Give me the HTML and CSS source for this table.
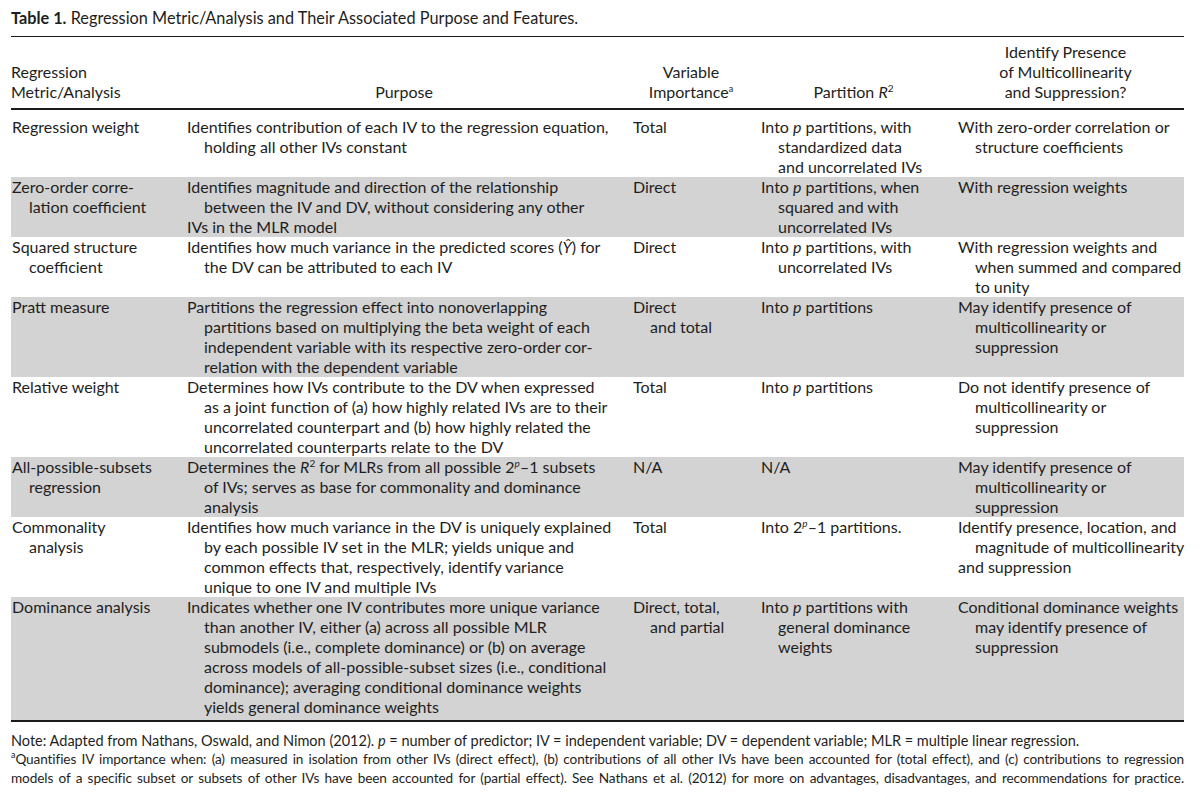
FILE: index.html
```html
<!DOCTYPE html>
<html>
<head>
<meta charset="utf-8">
<link rel="stylesheet" href="styles.css">
</head>
<body>
<div class="page">
  <div class="caption"><b>Table 1.</b> Regression Metric/Analysis and Their Associated Purpose and Features.</div>
  <table class="tbl">
    <colgroup>
      <col class="c1"><col class="c2"><col class="c3"><col class="c4"><col class="c5">
    </colgroup>
    <thead>
      <tr>
        <th class="left">Regression<br>Metric/Analysis</th>
        <th>Purpose</th>
        <th>Variable<br>Importance<sup class="sa">a</sup></th>
        <th>Partition <i>R</i><sup>2</sup></th>
        <th>Identify Presence<br>of Multicollinearity<br>and Suppression?</th>
      </tr>
    </thead>
    <tbody>
      <tr class="first">
        <td><div>Regression weight</div></td>
        <td><div>Identifies contribution of each IV to the regression equation,</div><div class="i">holding all other IVs constant</div></td>
        <td><div>Total</div></td>
        <td><div>Into <i>p</i> partitions, with</div><div class="i">standardized data</div><div class="i">and uncorrelated IVs</div></td>
        <td><div>With zero-order correlation or</div><div class="i">structure coefficients</div></td>
      </tr>
      <tr class="gray">
        <td><div>Zero-order corre-</div><div class="i">lation coefficient</div></td>
        <td><div>Identifies magnitude and direction of the relationship</div><div class="i">between the IV and DV, without considering any other</div><div>IVs in the MLR model</div></td>
        <td><div>Direct</div></td>
        <td><div>Into <i>p</i> partitions, when</div><div class="i">squared and with</div><div class="i">uncorrelated IVs</div></td>
        <td><div>With regression weights</div></td>
      </tr>
      <tr>
        <td><div>Squared structure</div><div class="i">coefficient</div></td>
        <td><div>Identifies how much variance in the predicted scores (<i>Ŷ</i>) for</div><div class="i">the DV can be attributed to each IV</div></td>
        <td><div>Direct</div></td>
        <td><div>Into <i>p</i> partitions, with</div><div class="i">uncorrelated IVs</div></td>
        <td><div>With regression weights and</div><div class="i">when summed and compared</div><div class="i">to unity</div></td>
      </tr>
      <tr class="gray">
        <td><div>Pratt measure</div></td>
        <td><div>Partitions the regression effect into nonoverlapping</div><div class="i">partitions based on multiplying the beta weight of each</div><div class="i">independent variable with its respective zero-order cor-</div><div class="i">relation with the dependent variable</div></td>
        <td><div>Direct</div><div class="i">and total</div></td>
        <td><div>Into <i>p</i> partitions</div></td>
        <td><div>May identify presence of</div><div class="i">multicollinearity or</div><div class="i">suppression</div></td>
      </tr>
      <tr>
        <td><div>Relative weight</div></td>
        <td><div>Determines how IVs contribute to the DV when expressed</div><div class="i">as a joint function of (a) how highly related IVs are to their</div><div class="i">uncorrelated counterpart and (b) how highly related the</div><div class="i">uncorrelated counterparts relate to the DV</div></td>
        <td><div>Total</div></td>
        <td><div>Into <i>p</i> partitions</div></td>
        <td><div>Do not identify presence of</div><div class="i">multicollinearity or</div><div class="i">suppression</div></td>
      </tr>
      <tr class="gray">
        <td><div>All-possible-subsets</div><div class="i">regression</div></td>
        <td><div>Determines the <i>R</i><sup>2</sup> for MLRs from all possible 2<sup><i>p</i></sup>–1 subsets</div><div class="i">of IVs; serves as base for commonality and dominance</div><div class="i">analysis</div></td>
        <td><div>N/A</div></td>
        <td><div>N/A</div></td>
        <td><div>May identify presence of</div><div class="i">multicollinearity or</div><div class="i">suppression</div></td>
      </tr>
      <tr>
        <td><div>Commonality</div><div class="i">analysis</div></td>
        <td><div>Identifies how much variance in the DV is uniquely explained</div><div class="i">by each possible IV set in the MLR; yields unique and</div><div class="i">common effects that, respectively, identify variance</div><div class="i">unique to one IV and multiple IVs</div></td>
        <td><div>Total</div></td>
        <td><div>Into 2<sup><i>p</i></sup>–1 partitions.</div></td>
        <td><div>Identify presence, location, and</div><div class="i">magnitude of multicollinearity</div><div>and suppression</div></td>
      </tr>
      <tr class="gray last">
        <td><div>Dominance analysis</div></td>
        <td><div>Indicates whether one IV contributes more unique variance</div><div class="i">than another IV, either (a) across all possible MLR</div><div class="i">submodels (i.e., complete dominance) or (b) on average</div><div class="i">across models of all-possible-subset sizes (i.e., conditional</div><div class="i">dominance); averaging conditional dominance weights</div><div class="i">yields general dominance weights</div></td>
        <td><div>Direct, total,</div><div class="i">and partial</div></td>
        <td><div>Into <i>p</i> partitions with</div><div class="i">general dominance</div><div class="i">weights</div></td>
        <td><div>Conditional dominance weights</div><div class="i">may identify presence of</div><div class="i">suppression</div></td>
      </tr>
    </tbody>
  </table>
  <div class="notes">
    <p>Note: Adapted from Nathans, Oswald, and Nimon (2012). <i>p</i> = number of predictor; IV = independent variable; DV = dependent variable; MLR = multiple linear regression.</p>
    <p class="j"><sup class="sa">a</sup>Quantifies IV importance when: (a) measured in isolation from other IVs (direct effect), (b) contributions of all other IVs have been accounted for (total effect), and (c) contributions to regression</p>
    <p class="j">models of a specific subset or subsets of other IVs have been accounted for (partial effect). See Nathans et al. (2012) for more on advantages, disadvantages, and recommendations for practice.</p>
  </div>
</div>
</body>
</html>
```
FILE: styles.css
```css
html, body {
  margin: 0;
  padding: 0;
  background: #ffffff;
}
body {
  font-family: "Lato", "Open Sans", sans-serif;
  font-size: 16px;
  line-height: 20px;
  color: #1e1e1e;
}
.page {
  padding: 8px 16px 0 11px;
}
.caption {
  height: 20px;
  line-height: 20px;
  font-size: 16.3px;
}
.caption b {
  font-weight: 700;
}
.tbl {
  margin-top: 8px;
  width: 1173px;
  border-collapse: collapse;
  table-layout: fixed;
  border-top: 1px solid #1a1a1a;
  border-bottom: 2px solid #1a1a1a;
}
.c1 { width: 175px; }
.c2 { width: 446px; }
.c3 { width: 128px; }
.c4 { width: 197px; }
.c5 { width: 227px; }
.tbl th {
  font-weight: 400;
  text-align: center;
  vertical-align: bottom;
  padding: 5px 10px 6px 0;
  border-bottom: 2px solid #1a1a1a;
  white-space: nowrap;
}
.tbl th.left {
  text-align: left;
}
.tbl td {
  vertical-align: top;
  padding: 0 0 0 1px;
  white-space: nowrap;
}
.tbl td .i {
  padding-left: 17px;
}
.tbl tr.first td {
  padding-top: 7px;
}
.tbl tr.last td {
  padding-bottom: 3px;
}
.tbl tr.gray td {
  background: #d3d3d3;
}
sup {
  font-size: 10px;
  line-height: 0;
  vertical-align: 6px;
}
sup.sa {
  font-size: 9px;
}
.notes {
  padding-top: 9px;
  width: 1173px;
}
.notes p {
  margin: 0;
  font-size: 14.5px;
  line-height: 19px;
  white-space: nowrap;
}
.notes p.j {
  font-size: 13.6px;
  letter-spacing: -0.1px;
  word-spacing: -0.5px;
  text-align: justify;
  text-align-last: justify;
  white-space: normal;
}
```
